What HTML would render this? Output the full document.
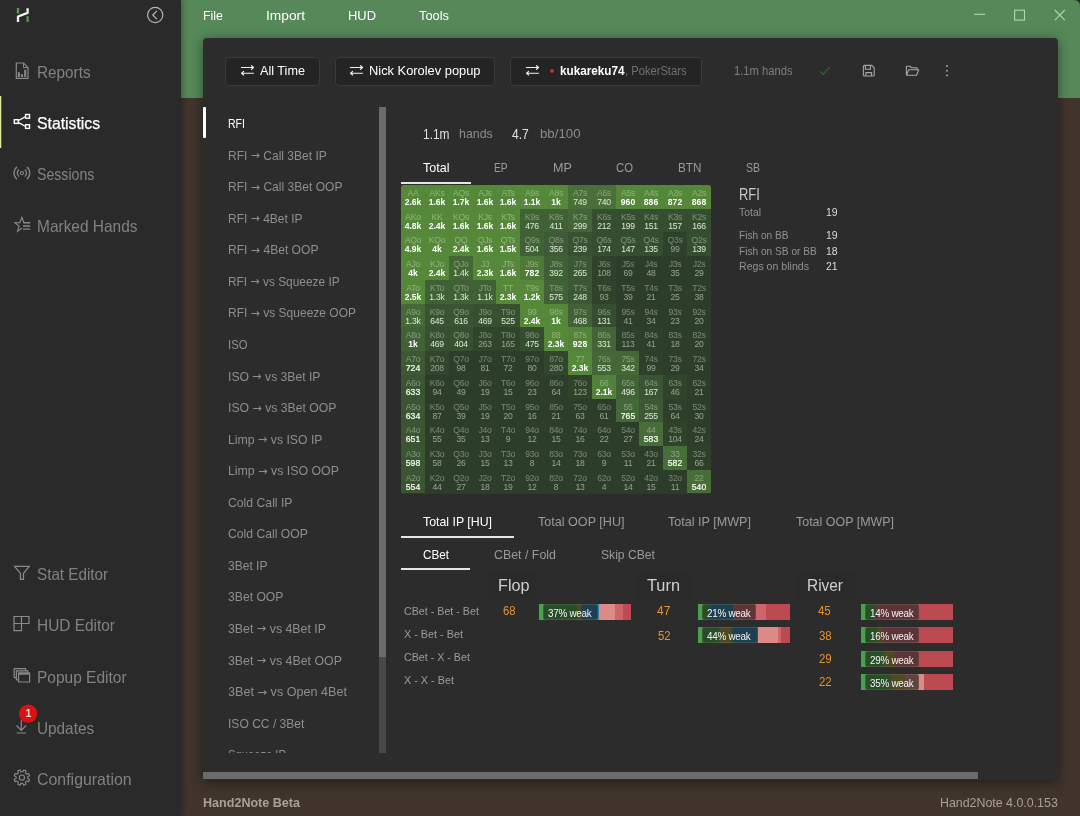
<!DOCTYPE html>
<html lang="en">
<head>
<meta charset="utf-8">
<title>Hand2Note</title>
<style>
*{box-sizing:border-box;margin:0;padding:0}
html,body{width:1080px;height:816px;overflow:hidden}
body{position:relative;will-change:transform;background:#40342d;font-family:"Liberation Sans",sans-serif;color:#ddd}
span,div,svg{position:absolute}
span{white-space:nowrap;display:block}
#green{left:181px;top:0;width:899px;height:98px;background:#56885a}
#side{left:0;top:0;width:181px;height:816px;background:#2a2a2a;box-shadow:1px 0 6px rgba(0,0,0,.38)}
#act{left:0;top:96px;width:2px;height:52px;background:linear-gradient(90deg,#e3ed98 0,#e3ed98 1.2px,rgba(227,237,152,.25) 1.2px)}
#panel{left:203px;top:38px;width:855px;height:742px;background:#2c2c2c;border-radius:4px 4px 2px 2px;box-shadow:0 2px 12px rgba(0,0,0,.45)}
.btn{background:#242424;border:1px solid #3a3a3a;border-radius:4px;height:29px;top:57px}
#sel{left:203px;top:107px;width:3px;height:31px;background:#fff;border-radius:1px}
#vtrack{left:379px;top:107px;width:7px;height:646px;background:#484848}
#vthumb{left:379px;top:107px;width:7px;height:550px;background:#6b6b6b}
#hthumb{left:203px;top:772px;width:775px;height:7px;background:#6b6b6b}
#list{left:206px;top:107px;width:172px;height:646px;overflow:hidden}
#grid{left:401px;top:185px;width:310px;height:309px;border-radius:3px;overflow:hidden;background:#2b3c28}
.c{width:24px;height:24px}
.c i,.c b{position:absolute;left:-8px;width:40px;text-align:center;font-style:normal;font-size:8.6px;line-height:10px;white-space:nowrap}
.c i{top:2.6px;color:rgba(232,242,226,.40);letter-spacing:-.3px}
.c b{top:12.2px;letter-spacing:-.2px}
.B{color:#fff;font-weight:700;letter-spacing:0 !important}
.R{color:#e0e6dc;font-weight:400}
.M{color:#fafcf8;font-weight:400;-webkit-text-stroke:.22px #fafcf8;letter-spacing:0 !important}
.D{color:#98a294;font-weight:400}
.ar{font-family:"DejaVu Sans",sans-serif;font-style:normal;font-size:92%;position:relative;top:-.5px}
.ul{height:2px;background:#e6e6e6}
.hd{background:#2a2a2a;border-radius:3px}
.bar{height:16px;width:92px;overflow:hidden}
.bar div{top:0;height:16px}
.bar .ov{top:0;height:16px;background:rgba(18,20,18,.6);border:1px solid rgba(130,140,100,.28);border-radius:2px}
.bar span{top:1px;line-height:16px;font-size:11.4px;color:#f4f4f4}
</style>
</head>
<body>
<div id="green"></div>
<div id="side"></div>
<div id="act"></div>
<svg style="left:8px;top:0px" width="30" height="30" viewBox="8 0 30 30" fill="none" stroke-width="2.3">
<path d="M18 8v5.6M27.6 16.2v5.7" stroke="#52a043"/>
<path d="M18 21.9v-5.4l9.6-3.6V8.3" stroke="#f4f4f4" stroke-linejoin="round"/></svg>
<svg style="left:145px;top:5px" width="20" height="20" viewBox="0 0 20 20" fill="none" stroke="#b6b6b6" stroke-width="1.2">
<circle cx="10.2" cy="10" r="7.6"/><path d="M11.6 6.2L7.8 10l3.8 3.8" stroke-linecap="round" stroke-linejoin="round"/></svg>
<span style="top:60.4px;font-size:16.5px;line-height:24px;color:#828282;transform:scaleX(0.928);transform-origin:0 50%;left:36.9px;">Reports</span>
<span style="top:111.2px;font-size:16.5px;line-height:24px;color:#ffffff;transform:scaleX(0.956);transform-origin:0 50%;left:36.9px;-webkit-text-stroke:.25px #fff;">Statistics</span>
<span style="top:162.4px;font-size:16.5px;line-height:24px;color:#828282;transform:scaleX(0.856);transform-origin:0 50%;left:36.9px;">Sessions</span>
<span style="top:213.5px;font-size:16.5px;line-height:24px;color:#828282;transform:scaleX(0.937);transform-origin:0 50%;left:36.9px;">Marked Hands</span>
<span style="top:562.3px;font-size:16.5px;line-height:24px;color:#828282;transform:scaleX(0.923);transform-origin:0 50%;left:36.9px;">Stat Editor</span>
<span style="top:613.3px;font-size:16.5px;line-height:24px;color:#828282;transform:scaleX(0.934);transform-origin:0 50%;left:36.9px;">HUD Editor</span>
<span style="top:664.6px;font-size:16.5px;line-height:24px;color:#828282;transform:scaleX(0.939);transform-origin:0 50%;left:36.9px;">Popup Editor</span>
<span style="top:715.7px;font-size:16.5px;line-height:24px;color:#828282;transform:scaleX(0.929);transform-origin:0 50%;left:36.9px;">Updates</span>
<span style="top:766.9px;font-size:16.5px;line-height:24px;color:#828282;transform:scaleX(0.964);transform-origin:0 50%;left:36.9px;">Configuration</span>
<svg style="left:8px;top:54px" width="30" height="30" viewBox="8 54 30 30" fill="none" stroke="#8a8a8a" stroke-width="1.2">
<path d="M16.3 63h7.2l4.5 4.5v10.9H16.3z"/><path d="M23.5 63v4.6H28" stroke-width="1"/>
<path d="M17.8 72.2h2.1v4.7h-2.1zM21 74.2h2v2.7h-2zM24.2 69.8h2v7.1h-2z" fill="#8a8a8a" stroke="none"/></svg>
<svg style="left:8px;top:106px" width="30" height="30" viewBox="8 106 30 30" fill="none" stroke="#ffffff" stroke-width="1.4">
<rect x="14.3" y="119.7" width="3.9" height="3.7"/><rect x="25.6" y="114.5" width="3.9" height="3.7"/><rect x="25.6" y="124.7" width="3.9" height="3.7"/>
<path d="M18.6 120.5l6.6-3.6M18.6 122.6l6.6 3.7" stroke-width="1.3"/></svg>
<svg style="left:8px;top:158px" width="30" height="30" viewBox="8 158 30 30" fill="none" stroke="#8a8a8a" stroke-width="1.25">
<circle cx="21.9" cy="173.1" r="1.6" stroke-width="1.1"/>
<path d="M18.94 169.58a4.6 4.6 0 0 0 0 7.04M24.86 169.58a4.6 4.6 0 0 1 0 7.04"/>
<path d="M16.93 166.96a7.9 7.9 0 0 0 0 12.28M26.87 166.96a7.9 7.9 0 0 1 0 12.28"/></svg>
<svg style="left:8px;top:209px" width="30" height="30" viewBox="8 209 30 30" fill="none" stroke="#8a8a8a" stroke-width="1.15" stroke-linejoin="miter">
<path d="M23.9 222.7l-2-5.3-2 5.3h-5l4.2 3.4-1.6 5.2 4.6-3.2"/>
<path d="M23.4 222.7h6.8M23 226h7.2M23 229.1h7.2" stroke-width="1.4"/></svg>
<svg style="left:8px;top:558px" width="30" height="30" viewBox="8 558 30 30" fill="none" stroke="#8a8a8a" stroke-width="1.25" stroke-linejoin="miter">
<path d="M14.6 566.3h14.6l-5.7 7.1v6h-3.1v-6z"/></svg>
<svg style="left:8px;top:609px" width="30" height="30" viewBox="8 609 30 30" fill="none" stroke="#8a8a8a" stroke-width="1.2">
<path d="M14 616.5h15v7h-7.5v7.1H14zM21.5 616.5v7M14 623.5h7.5"/></svg>
<svg style="left:8px;top:660px" width="30" height="30" viewBox="8 660 30 30" fill="none" stroke="#8a8a8a" stroke-width="1.2" stroke-linejoin="round">
<rect x="18.6" y="672.9" width="11" height="9.1"/><path d="M18.6 673.9h11" stroke-width="1.6"/>
<path d="M27.8 672.3v-1.5H16.4v9h2M25.6 670.2v-1.5H14.2v8.9h2"/></svg>
<svg style="left:8px;top:702px" width="30" height="40" viewBox="8 702 30 40" fill="none" stroke="#8a8a8a" stroke-width="1.2">
<path d="M21.3 720v10.2M16.5 725.5l4.8 4.8 4.8-4.8M16.6 733h9.4"/>
<circle cx="28.1" cy="713.8" r="9.2" fill="#d81212" stroke="none"/></svg>
<span style="top:707.4px;font-size:10.5px;line-height:12px;color:#ffd2cd;left:-71.7px;width:200px;text-align:center;font-weight:700;">1</span>
<svg style="left:8px;top:762px" width="30" height="30" viewBox="8 762 30 30" fill="none" stroke="#8a8a8a" stroke-width="1.15" stroke-linejoin="round">
<path d="M29.58 779.44L28.64 781.73L26.67 781.07L25.37 782.37L26.03 784.34L23.74 785.28L22.82 783.43L20.98 783.43L20.06 785.28L17.77 784.34L18.43 782.37L17.13 781.07L15.16 781.73L14.22 779.44L16.07 778.52L16.07 776.68L14.22 775.76L15.16 773.47L17.13 774.13L18.43 772.83L17.77 770.86L20.06 769.92L20.98 771.77L22.82 771.77L23.74 769.92L26.03 770.86L25.37 772.83L26.67 774.13L28.64 773.47L29.58 775.76L27.73 776.68L27.73 778.52z"/><circle cx="21.9" cy="777.6" r="2.6"/></svg>
<span style="top:6.5px;font-size:13px;line-height:18px;color:#ffffff;transform:scaleX(0.955);transform-origin:0 50%;left:203px;">File</span>
<span style="top:6.5px;font-size:13px;line-height:18px;color:#ffffff;transform:scaleX(1.059);transform-origin:0 50%;left:266px;">Import</span>
<span style="top:6.5px;font-size:13px;line-height:18px;color:#ffffff;transform:scaleX(0.994);transform-origin:0 50%;left:348px;">HUD</span>
<span style="top:6.5px;font-size:13px;line-height:18px;color:#ffffff;transform:scaleX(0.989);transform-origin:0 50%;left:419px;">Tools</span>
<svg style="left:966px;top:0" width="110" height="30" viewBox="0 0 110 30" fill="none" stroke="#a9d8a5" stroke-width="1.15">
<path d="M8 14.3h11"/><rect x="48.6" y="10.2" width="9.9" height="9.9"/><path d="M88.8 10l10 10.2M98.8 10l-10 10.2"/></svg>
<svg style="left:1072px;top:0" width="8" height="8" viewBox="0 0 8 8"><path d="M8 0H2.5A5.5 5.5 0 0 1 8 5.5z" fill="#20271f"/></svg>
<div id="panel"></div>
<div class="btn" style="left:225px;width:95px"></div>
<div class="btn" style="left:335px;width:160px"></div>
<div class="btn" style="left:510px;width:192px"></div>
<svg style="left:240px;top:64px" width="16" height="14" viewBox="0 0 16 14" fill="none" stroke="#f0f0f0" stroke-width="1.15" stroke-linejoin="round" stroke-linecap="round">
<path d="M1.4 3.5h12M11.5 1.7l2 1.8-2 1.8M13.4 9.2H1.6M3.6 7.4L1.6 9.2l2 1.8"/></svg>
<svg style="left:349px;top:64px" width="16" height="14" viewBox="0 0 16 14" fill="none" stroke="#f0f0f0" stroke-width="1.15" stroke-linejoin="round" stroke-linecap="round">
<path d="M1.4 3.5h12M11.5 1.7l2 1.8-2 1.8M13.4 9.2H1.6M3.6 7.4L1.6 9.2l2 1.8"/></svg>
<svg style="left:524.5px;top:64px" width="16" height="14" viewBox="0 0 16 14" fill="none" stroke="#f0f0f0" stroke-width="1.15" stroke-linejoin="round" stroke-linecap="round">
<path d="M1.4 3.5h12M11.5 1.7l2 1.8-2 1.8M13.4 9.2H1.6M3.6 7.4L1.6 9.2l2 1.8"/></svg>
<span style="top:62.0px;font-size:13px;line-height:18px;color:#ffffff;transform:scaleX(0.973);transform-origin:0 50%;left:259.5px;">All Time</span>
<span style="top:62.0px;font-size:13px;line-height:18px;color:#ffffff;transform:scaleX(0.989);transform-origin:0 50%;left:369px;">Nick Korolev popup</span>
<div style="left:550px;top:69px;width:4px;height:4px;border-radius:2px;background:#aa382e"></div>
<span style="top:61.5px;font-size:13px;line-height:18px;color:#ffffff;transform:scaleX(0.901);transform-origin:0 50%;left:560px;font-weight:700;">kukareku74</span>
<span style="top:61.5px;font-size:13px;line-height:18px;color:#707070;transform:scaleX(0.860);transform-origin:0 50%;left:625px;">, PokerStars</span>
<span style="top:62.0px;font-size:12.5px;line-height:18px;color:#7e7e7e;transform:scaleX(0.896);transform-origin:0 50%;left:733.5px;">1.1m hands</span>
<svg style="left:817px;top:63px" width="16" height="16" viewBox="0 0 16 16" fill="none" stroke="#256a25" stroke-width="1.3"><path d="M3 8.2l3 3 6.8-7"/></svg>
<svg style="left:861px;top:63px" width="16" height="16" viewBox="0 0 16 16" fill="none" stroke="#a6a6a6" stroke-width="1.1">
<path d="M2.4 3.4a1 1 0 0 1 1-1h7.4l2.4 2.4v7.2a1 1 0 0 1-1 1H3.4a1 1 0 0 1-1-1z"/><path d="M4.4 2.4v3.8h5v-3.8M4.8 13V9.6h5.8V13"/></svg>
<svg style="left:904px;top:63px" width="18" height="16" viewBox="0 0 18 16" fill="none" stroke="#a6a6a6" stroke-width="1.1" stroke-linejoin="round">
<path d="M2.4 12.2V3.2h3.6l1.3 1.5h5.7v2M2.4 12.2l2.3-5.5h10.1l-2.3 5.5z"/></svg>
<svg style="left:943px;top:62px" width="8" height="18" viewBox="0 0 8 18" fill="#a8a8a8"><circle cx="4" cy="4" r=".95"/><circle cx="4" cy="8.7" r=".95"/><circle cx="4" cy="13.4" r=".95"/></svg>
<div id="sel"></div>
<div id="vtrack"></div><div id="vthumb"></div>
<div id="list">
<span style="top:8.1px;font-size:12.6px;line-height:18px;color:#ffffff;transform:scaleX(0.838);transform-origin:0 50%;left:22px;">RFI</span>
<span style="top:39.7px;font-size:12.6px;line-height:18px;color:#8e8e8e;transform:scaleX(0.954);transform-origin:0 50%;left:22px;">RFI <i class="ar">→</i> Call 3Bet IP</span>
<span style="top:71.2px;font-size:12.6px;line-height:18px;color:#8e8e8e;transform:scaleX(0.957);transform-origin:0 50%;left:22px;">RFI <i class="ar">→</i> Call 3Bet OOP</span>
<span style="top:102.8px;font-size:12.6px;line-height:18px;color:#8e8e8e;transform:scaleX(0.951);transform-origin:0 50%;left:22px;">RFI <i class="ar">→</i> 4Bet IP</span>
<span style="top:134.3px;font-size:12.6px;line-height:18px;color:#8e8e8e;transform:scaleX(0.958);transform-origin:0 50%;left:22px;">RFI <i class="ar">→</i> 4Bet OOP</span>
<span style="top:165.9px;font-size:12.6px;line-height:18px;color:#8e8e8e;transform:scaleX(0.945);transform-origin:0 50%;left:22px;">RFI <i class="ar">→</i> vs Squeeze IP</span>
<span style="top:197.4px;font-size:12.6px;line-height:18px;color:#8e8e8e;transform:scaleX(0.953);transform-origin:0 50%;left:22px;">RFI <i class="ar">→</i> vs Squeeze OOP</span>
<span style="top:228.9px;font-size:12.6px;line-height:18px;color:#8e8e8e;transform:scaleX(0.898);transform-origin:0 50%;left:22px;">ISO</span>
<span style="top:260.5px;font-size:12.6px;line-height:18px;color:#8e8e8e;transform:scaleX(0.965);transform-origin:0 50%;left:22px;">ISO <i class="ar">→</i> vs 3Bet IP</span>
<span style="top:292.0px;font-size:12.6px;line-height:18px;color:#8e8e8e;transform:scaleX(0.969);transform-origin:0 50%;left:22px;">ISO <i class="ar">→</i> vs 3Bet OOP</span>
<span style="top:323.6px;font-size:12.6px;line-height:18px;color:#8e8e8e;transform:scaleX(0.972);transform-origin:0 50%;left:22px;">Limp <i class="ar">→</i> vs ISO IP</span>
<span style="top:355.1px;font-size:12.6px;line-height:18px;color:#8e8e8e;transform:scaleX(0.979);transform-origin:0 50%;left:22px;">Limp <i class="ar">→</i> vs ISO OOP</span>
<span style="top:386.7px;font-size:12.6px;line-height:18px;color:#8e8e8e;transform:scaleX(0.970);transform-origin:0 50%;left:22px;">Cold Call IP</span>
<span style="top:418.2px;font-size:12.6px;line-height:18px;color:#8e8e8e;transform:scaleX(0.968);transform-origin:0 50%;left:22px;">Cold Call OOP</span>
<span style="top:449.8px;font-size:12.6px;line-height:18px;color:#8e8e8e;transform:scaleX(0.956);transform-origin:0 50%;left:22px;">3Bet IP</span>
<span style="top:481.4px;font-size:12.6px;line-height:18px;color:#8e8e8e;transform:scaleX(0.966);transform-origin:0 50%;left:22px;">3Bet OOP</span>
<span style="top:512.9px;font-size:12.6px;line-height:18px;color:#8e8e8e;transform:scaleX(0.979);transform-origin:0 50%;left:22px;">3Bet <i class="ar">→</i> vs 4Bet IP</span>
<span style="top:544.5px;font-size:12.6px;line-height:18px;color:#8e8e8e;transform:scaleX(0.981);transform-origin:0 50%;left:22px;">3Bet <i class="ar">→</i> vs 4Bet OOP</span>
<span style="top:576.0px;font-size:12.6px;line-height:18px;color:#8e8e8e;transform:scaleX(1.000);transform-origin:0 50%;left:22px;">3Bet <i class="ar">→</i> vs Open 4Bet</span>
<span style="top:607.6px;font-size:12.6px;line-height:18px;color:#8e8e8e;transform:scaleX(0.958);transform-origin:0 50%;left:22px;">ISO CC / 3Bet</span>
<span style="top:639.1px;font-size:12.6px;line-height:18px;color:#8e8e8e;transform:scaleX(0.890);transform-origin:0 50%;left:22px;">Squeeze IP</span>
</div>
<span style="top:124.3px;font-size:14px;line-height:20px;color:#e2e2e2;transform:scaleX(0.851);transform-origin:0 50%;left:422.5px;">1.1m</span>
<span style="top:124.3px;font-size:13px;line-height:20px;color:#8c8c8c;transform:scaleX(0.951);transform-origin:0 50%;left:459px;">hands</span>
<span style="top:124.3px;font-size:14px;line-height:20px;color:#e2e2e2;transform:scaleX(0.858);transform-origin:0 50%;left:512.3px;">4.7</span>
<span style="top:124.3px;font-size:13px;line-height:20px;color:#8c8c8c;transform:scaleX(1.019);transform-origin:0 50%;left:539.5px;">bb/100</span>
<span style="top:159.0px;font-size:13px;line-height:18px;color:#ffffff;transform:scaleX(0.965);transform-origin:0 50%;left:423px;">Total</span>
<span style="top:159.0px;font-size:13px;line-height:18px;color:#9a9a9a;transform:scaleX(0.784);transform-origin:0 50%;left:494.4px;">EP</span>
<span style="top:159.0px;font-size:13px;line-height:18px;color:#9a9a9a;transform:scaleX(0.964);transform-origin:0 50%;left:552.7px;">MP</span>
<span style="top:159.0px;font-size:13px;line-height:18px;color:#9a9a9a;transform:scaleX(0.872);transform-origin:0 50%;left:616.2px;">CO</span>
<span style="top:159.0px;font-size:13px;line-height:18px;color:#9a9a9a;transform:scaleX(0.900);transform-origin:0 50%;left:678px;">BTN</span>
<span style="top:159.0px;font-size:13px;line-height:18px;color:#9a9a9a;transform:scaleX(0.807);transform-origin:0 50%;left:746px;">SB</span>
<div class="ul" style="left:401px;top:182px;width:70px"></div>
<div id="grid">
<div class="c" style="left:0px;top:0px;width:24px;height:24px;background:rgb(85, 136, 57)"><i>AA</i><b class="B">2.6k</b></div>
<div class="c" style="left:24px;top:0px;width:24px;height:24px;background:rgb(85, 136, 57)"><i>AKs</i><b class="B">1.6k</b></div>
<div class="c" style="left:48px;top:0px;width:24px;height:24px;background:rgb(85, 136, 57)"><i>AQs</i><b class="B">1.7k</b></div>
<div class="c" style="left:72px;top:0px;width:23px;height:24px;background:rgb(85, 136, 57)"><i>AJs</i><b class="B">1.6k</b></div>
<div class="c" style="left:95px;top:0px;width:24px;height:24px;background:rgb(85, 136, 57)"><i>ATs</i><b class="B">1.6k</b></div>
<div class="c" style="left:119px;top:0px;width:24px;height:24px;background:rgb(85, 136, 57)"><i>A9s</i><b class="B">1.1k</b></div>
<div class="c" style="left:143px;top:0px;width:24px;height:24px;background:rgb(85, 136, 57)"><i>A8s</i><b class="B">1k</b></div>
<div class="c" style="left:167px;top:0px;width:24px;height:24px;background:rgb(72, 112, 56)"><i>A7s</i><b class="R">749</b></div>
<div class="c" style="left:191px;top:0px;width:24px;height:24px;background:rgb(72, 112, 56)"><i>A6s</i><b class="R">740</b></div>
<div class="c" style="left:215px;top:0px;width:23px;height:24px;background:rgb(84, 135, 57)"><i>A5s</i><b class="B">960</b></div>
<div class="c" style="left:238px;top:0px;width:24px;height:24px;background:rgb(84, 135, 57)"><i>A4s</i><b class="B">886</b></div>
<div class="c" style="left:262px;top:0px;width:24px;height:24px;background:rgb(84, 135, 57)"><i>A3s</i><b class="B">872</b></div>
<div class="c" style="left:286px;top:0px;width:24px;height:24px;background:rgb(84, 135, 57)"><i>A2s</i><b class="B">868</b></div>
<div class="c" style="left:0px;top:24px;width:24px;height:23px;background:rgb(85, 136, 57)"><i>AKo</i><b class="B">4.8k</b></div>
<div class="c" style="left:24px;top:24px;width:24px;height:23px;background:rgb(85, 136, 57)"><i>KK</i><b class="B">2.4k</b></div>
<div class="c" style="left:48px;top:24px;width:24px;height:23px;background:rgb(85, 136, 57)"><i>KQs</i><b class="B">1.6k</b></div>
<div class="c" style="left:72px;top:24px;width:23px;height:23px;background:rgb(85, 136, 57)"><i>KJs</i><b class="B">1.6k</b></div>
<div class="c" style="left:95px;top:24px;width:24px;height:23px;background:rgb(85, 136, 57)"><i>KTs</i><b class="B">1.6k</b></div>
<div class="c" style="left:119px;top:24px;width:24px;height:23px;background:rgb(64, 96, 54)"><i>K9s</i><b class="R">476</b></div>
<div class="c" style="left:143px;top:24px;width:24px;height:23px;background:rgb(64, 96, 54)"><i>K8s</i><b class="R">411</b></div>
<div class="c" style="left:167px;top:24px;width:24px;height:23px;background:rgb(67, 101, 55)"><i>K7s</i><b class="R">299</b></div>
<div class="c" style="left:191px;top:24px;width:24px;height:23px;background:rgb(54, 78, 48)"><i>K6s</i><b class="R">212</b></div>
<div class="c" style="left:215px;top:24px;width:23px;height:23px;background:rgb(54, 78, 48)"><i>K5s</i><b class="R">199</b></div>
<div class="c" style="left:238px;top:24px;width:24px;height:23px;background:rgb(54, 78, 48)"><i>K4s</i><b class="R">151</b></div>
<div class="c" style="left:262px;top:24px;width:24px;height:23px;background:rgb(54, 78, 48)"><i>K3s</i><b class="R">157</b></div>
<div class="c" style="left:286px;top:24px;width:24px;height:23px;background:rgb(54, 78, 48)"><i>K2s</i><b class="R">166</b></div>
<div class="c" style="left:0px;top:47px;width:24px;height:24px;background:rgb(85, 136, 57)"><i>AQo</i><b class="B">4.9k</b></div>
<div class="c" style="left:24px;top:47px;width:24px;height:24px;background:rgb(85, 136, 57)"><i>KQo</i><b class="B">4k</b></div>
<div class="c" style="left:48px;top:47px;width:24px;height:24px;background:rgb(85, 136, 57)"><i>QQ</i><b class="B">2.4k</b></div>
<div class="c" style="left:72px;top:47px;width:23px;height:24px;background:rgb(85, 136, 57)"><i>QJs</i><b class="B">1.6k</b></div>
<div class="c" style="left:95px;top:47px;width:24px;height:24px;background:rgb(85, 136, 57)"><i>QTs</i><b class="B">1.5k</b></div>
<div class="c" style="left:119px;top:47px;width:24px;height:24px;background:rgb(64, 96, 54)"><i>Q9s</i><b class="R">504</b></div>
<div class="c" style="left:143px;top:47px;width:24px;height:24px;background:rgb(61, 91, 52)"><i>Q8s</i><b class="R">356</b></div>
<div class="c" style="left:167px;top:47px;width:24px;height:24px;background:rgb(56, 82, 49)"><i>Q7s</i><b class="R">239</b></div>
<div class="c" style="left:191px;top:47px;width:24px;height:24px;background:rgb(54, 78, 48)"><i>Q6s</i><b class="R">174</b></div>
<div class="c" style="left:215px;top:47px;width:23px;height:24px;background:rgb(54, 78, 48)"><i>Q5s</i><b class="R">147</b></div>
<div class="c" style="left:238px;top:47px;width:24px;height:24px;background:rgb(54, 78, 48)"><i>Q4s</i><b class="R">135</b></div>
<div class="c" style="left:262px;top:47px;width:24px;height:24px;background:rgb(46, 65, 42)"><i>Q3s</i><b class="D">99</b></div>
<div class="c" style="left:286px;top:47px;width:24px;height:24px;background:rgb(54, 78, 48)"><i>Q2s</i><b class="R">139</b></div>
<div class="c" style="left:0px;top:71px;width:24px;height:24px;background:rgb(85, 136, 57)"><i>AJo</i><b class="B">4k</b></div>
<div class="c" style="left:24px;top:71px;width:24px;height:24px;background:rgb(85, 136, 57)"><i>KJo</i><b class="B">2.4k</b></div>
<div class="c" style="left:48px;top:71px;width:24px;height:24px;background:rgb(68, 103, 55)"><i>QJo</i><b class="R">1.4k</b></div>
<div class="c" style="left:72px;top:71px;width:23px;height:24px;background:rgb(85, 136, 57)"><i>JJ</i><b class="B">2.3k</b></div>
<div class="c" style="left:95px;top:71px;width:24px;height:24px;background:rgb(85, 136, 57)"><i>JTs</i><b class="B">1.6k</b></div>
<div class="c" style="left:119px;top:71px;width:24px;height:24px;background:rgb(78, 122, 57)"><i>J9s</i><b class="B">782</b></div>
<div class="c" style="left:143px;top:71px;width:24px;height:24px;background:rgb(63, 95, 53)"><i>J8s</i><b class="R">392</b></div>
<div class="c" style="left:167px;top:71px;width:24px;height:24px;background:rgb(59, 87, 51)"><i>J7s</i><b class="R">265</b></div>
<div class="c" style="left:191px;top:71px;width:24px;height:24px;background:rgb(47, 67, 43)"><i>J6s</i><b class="D">108</b></div>
<div class="c" style="left:215px;top:71px;width:23px;height:24px;background:rgb(44, 62, 41)"><i>J5s</i><b class="D">69</b></div>
<div class="c" style="left:238px;top:71px;width:24px;height:24px;background:rgb(44, 62, 41)"><i>J4s</i><b class="D">48</b></div>
<div class="c" style="left:262px;top:71px;width:24px;height:24px;background:rgb(44, 62, 41)"><i>J3s</i><b class="D">35</b></div>
<div class="c" style="left:286px;top:71px;width:24px;height:24px;background:rgb(44, 62, 41)"><i>J2s</i><b class="D">29</b></div>
<div class="c" style="left:0px;top:95px;width:24px;height:24px;background:rgb(85, 136, 57)"><i>ATo</i><b class="B">2.5k</b></div>
<div class="c" style="left:24px;top:95px;width:24px;height:24px;background:rgb(64, 96, 54)"><i>KTo</i><b class="R">1.3k</b></div>
<div class="c" style="left:48px;top:95px;width:24px;height:24px;background:rgb(64, 96, 54)"><i>QTo</i><b class="R">1.3k</b></div>
<div class="c" style="left:72px;top:95px;width:23px;height:24px;background:rgb(64, 96, 54)"><i>JTo</i><b class="R">1.1k</b></div>
<div class="c" style="left:95px;top:95px;width:24px;height:24px;background:rgb(85, 136, 57)"><i>TT</i><b class="B">2.3k</b></div>
<div class="c" style="left:119px;top:95px;width:24px;height:24px;background:rgb(85, 136, 57)"><i>T9s</i><b class="B">1.2k</b></div>
<div class="c" style="left:143px;top:95px;width:24px;height:24px;background:rgb(65, 98, 54)"><i>T8s</i><b class="R">575</b></div>
<div class="c" style="left:167px;top:95px;width:24px;height:24px;background:rgb(59, 87, 51)"><i>T7s</i><b class="R">248</b></div>
<div class="c" style="left:191px;top:95px;width:24px;height:24px;background:rgb(47, 67, 43)"><i>T6s</i><b class="D">93</b></div>
<div class="c" style="left:215px;top:95px;width:23px;height:24px;background:rgb(44, 61, 41)"><i>T5s</i><b class="D">39</b></div>
<div class="c" style="left:238px;top:95px;width:24px;height:24px;background:rgb(44, 61, 41)"><i>T4s</i><b class="D">21</b></div>
<div class="c" style="left:262px;top:95px;width:24px;height:24px;background:rgb(44, 61, 41)"><i>T3s</i><b class="D">25</b></div>
<div class="c" style="left:286px;top:95px;width:24px;height:24px;background:rgb(44, 61, 41)"><i>T2s</i><b class="D">38</b></div>
<div class="c" style="left:0px;top:119px;width:24px;height:23px;background:rgb(69, 106, 56)"><i>A9o</i><b class="R">1.3k</b></div>
<div class="c" style="left:24px;top:119px;width:24px;height:23px;background:rgb(57, 84, 50)"><i>K9o</i><b class="R">645</b></div>
<div class="c" style="left:48px;top:119px;width:24px;height:23px;background:rgb(57, 84, 50)"><i>Q9o</i><b class="R">616</b></div>
<div class="c" style="left:72px;top:119px;width:23px;height:23px;background:rgb(55, 81, 48)"><i>J9o</i><b class="R">469</b></div>
<div class="c" style="left:95px;top:119px;width:24px;height:23px;background:rgb(55, 81, 48)"><i>T9o</i><b class="R">525</b></div>
<div class="c" style="left:119px;top:119px;width:24px;height:23px;background:rgb(85, 136, 57)"><i>99</i><b class="B">2.4k</b></div>
<div class="c" style="left:143px;top:119px;width:24px;height:23px;background:rgb(85, 136, 57)"><i>98s</i><b class="B">1k</b></div>
<div class="c" style="left:167px;top:119px;width:24px;height:23px;background:rgb(65, 98, 54)"><i>97s</i><b class="R">468</b></div>
<div class="c" style="left:191px;top:119px;width:24px;height:23px;background:rgb(54, 78, 48)"><i>96s</i><b class="R">131</b></div>
<div class="c" style="left:215px;top:119px;width:23px;height:23px;background:rgb(44, 61, 41)"><i>95s</i><b class="D">41</b></div>
<div class="c" style="left:238px;top:119px;width:24px;height:23px;background:rgb(44, 61, 41)"><i>94s</i><b class="D">34</b></div>
<div class="c" style="left:262px;top:119px;width:24px;height:23px;background:rgb(44, 61, 41)"><i>93s</i><b class="D">23</b></div>
<div class="c" style="left:286px;top:119px;width:24px;height:23px;background:rgb(44, 61, 41)"><i>92s</i><b class="D">20</b></div>
<div class="c" style="left:0px;top:142px;width:24px;height:24px;background:rgb(65, 98, 54)"><i>A8o</i><b class="B">1k</b></div>
<div class="c" style="left:24px;top:142px;width:24px;height:24px;background:rgb(55, 81, 48)"><i>K8o</i><b class="R">469</b></div>
<div class="c" style="left:48px;top:142px;width:24px;height:24px;background:rgb(55, 81, 48)"><i>Q8o</i><b class="R">404</b></div>
<div class="c" style="left:72px;top:142px;width:23px;height:24px;background:rgb(48, 69, 44)"><i>J8o</i><b class="D">263</b></div>
<div class="c" style="left:95px;top:142px;width:24px;height:24px;background:rgb(48, 69, 44)"><i>T8o</i><b class="D">165</b></div>
<div class="c" style="left:119px;top:142px;width:24px;height:24px;background:rgb(54, 78, 48)"><i>98o</i><b class="R">475</b></div>
<div class="c" style="left:143px;top:142px;width:24px;height:24px;background:rgb(85, 136, 57)"><i>88</i><b class="B">2.3k</b></div>
<div class="c" style="left:167px;top:142px;width:24px;height:24px;background:rgb(83, 132, 57)"><i>87s</i><b class="B">928</b></div>
<div class="c" style="left:191px;top:142px;width:24px;height:24px;background:rgb(66, 100, 55)"><i>86s</i><b class="R">331</b></div>
<div class="c" style="left:215px;top:142px;width:23px;height:24px;background:rgb(45, 64, 42)"><i>85s</i><b class="D">113</b></div>
<div class="c" style="left:238px;top:142px;width:24px;height:24px;background:rgb(45, 64, 42)"><i>84s</i><b class="D">41</b></div>
<div class="c" style="left:262px;top:142px;width:24px;height:24px;background:rgb(44, 61, 41)"><i>83s</i><b class="D">18</b></div>
<div class="c" style="left:286px;top:142px;width:24px;height:24px;background:rgb(44, 61, 41)"><i>82s</i><b class="D">20</b></div>
<div class="c" style="left:0px;top:166px;width:24px;height:24px;background:rgb(60, 89, 51)"><i>A7o</i><b class="M">724</b></div>
<div class="c" style="left:24px;top:166px;width:24px;height:24px;background:rgb(49, 70, 44)"><i>K7o</i><b class="D">208</b></div>
<div class="c" style="left:48px;top:166px;width:24px;height:24px;background:rgb(44, 61, 41)"><i>Q7o</i><b class="D">98</b></div>
<div class="c" style="left:72px;top:166px;width:23px;height:24px;background:rgb(44, 61, 41)"><i>J7o</i><b class="D">81</b></div>
<div class="c" style="left:95px;top:166px;width:24px;height:24px;background:rgb(44, 61, 41)"><i>T7o</i><b class="D">72</b></div>
<div class="c" style="left:119px;top:166px;width:24px;height:24px;background:rgb(44, 61, 41)"><i>97o</i><b class="D">80</b></div>
<div class="c" style="left:143px;top:166px;width:24px;height:24px;background:rgb(49, 70, 44)"><i>87o</i><b class="D">280</b></div>
<div class="c" style="left:167px;top:166px;width:24px;height:24px;background:rgb(85, 136, 57)"><i>77</i><b class="B">2.3k</b></div>
<div class="c" style="left:191px;top:166px;width:24px;height:24px;background:rgb(68, 103, 55)"><i>76s</i><b class="R">553</b></div>
<div class="c" style="left:215px;top:166px;width:23px;height:24px;background:rgb(68, 104, 55)"><i>75s</i><b class="R">342</b></div>
<div class="c" style="left:238px;top:166px;width:24px;height:24px;background:rgb(46, 64, 42)"><i>74s</i><b class="D">99</b></div>
<div class="c" style="left:262px;top:166px;width:24px;height:24px;background:rgb(44, 61, 41)"><i>73s</i><b class="D">29</b></div>
<div class="c" style="left:286px;top:166px;width:24px;height:24px;background:rgb(44, 61, 41)"><i>72s</i><b class="D">34</b></div>
<div class="c" style="left:0px;top:190px;width:24px;height:24px;background:rgb(58, 85, 50)"><i>A6o</i><b class="M">633</b></div>
<div class="c" style="left:24px;top:190px;width:24px;height:24px;background:rgb(44, 62, 41)"><i>K6o</i><b class="D">94</b></div>
<div class="c" style="left:48px;top:190px;width:24px;height:24px;background:rgb(44, 61, 41)"><i>Q6o</i><b class="D">49</b></div>
<div class="c" style="left:72px;top:190px;width:23px;height:24px;background:rgb(44, 61, 41)"><i>J6o</i><b class="D">19</b></div>
<div class="c" style="left:95px;top:190px;width:24px;height:24px;background:rgb(44, 61, 41)"><i>T6o</i><b class="D">15</b></div>
<div class="c" style="left:119px;top:190px;width:24px;height:24px;background:rgb(44, 61, 41)"><i>96o</i><b class="D">23</b></div>
<div class="c" style="left:143px;top:190px;width:24px;height:24px;background:rgb(44, 61, 41)"><i>86o</i><b class="D">64</b></div>
<div class="c" style="left:167px;top:190px;width:24px;height:24px;background:rgb(47, 67, 43)"><i>76o</i><b class="D">123</b></div>
<div class="c" style="left:191px;top:190px;width:24px;height:24px;background:rgb(82, 130, 57)"><i>66</i><b class="B">2.1k</b></div>
<div class="c" style="left:215px;top:190px;width:23px;height:24px;background:rgb(65, 98, 54)"><i>65s</i><b class="R">496</b></div>
<div class="c" style="left:238px;top:190px;width:24px;height:24px;background:rgb(57, 84, 50)"><i>64s</i><b class="R">167</b></div>
<div class="c" style="left:262px;top:190px;width:24px;height:24px;background:rgb(48, 68, 43)"><i>63s</i><b class="D">46</b></div>
<div class="c" style="left:286px;top:190px;width:24px;height:24px;background:rgb(44, 61, 41)"><i>62s</i><b class="D">21</b></div>
<div class="c" style="left:0px;top:214px;width:24px;height:23px;background:rgb(58, 85, 50)"><i>A5o</i><b class="M">634</b></div>
<div class="c" style="left:24px;top:214px;width:24px;height:23px;background:rgb(44, 61, 41)"><i>K5o</i><b class="D">87</b></div>
<div class="c" style="left:48px;top:214px;width:24px;height:23px;background:rgb(44, 61, 41)"><i>Q5o</i><b class="D">39</b></div>
<div class="c" style="left:72px;top:214px;width:23px;height:23px;background:rgb(44, 61, 41)"><i>J5o</i><b class="D">19</b></div>
<div class="c" style="left:95px;top:214px;width:24px;height:23px;background:rgb(44, 61, 41)"><i>T5o</i><b class="D">20</b></div>
<div class="c" style="left:119px;top:214px;width:24px;height:23px;background:rgb(44, 61, 41)"><i>95o</i><b class="D">16</b></div>
<div class="c" style="left:143px;top:214px;width:24px;height:23px;background:rgb(44, 61, 41)"><i>85o</i><b class="D">21</b></div>
<div class="c" style="left:167px;top:214px;width:24px;height:23px;background:rgb(44, 61, 41)"><i>75o</i><b class="D">63</b></div>
<div class="c" style="left:191px;top:214px;width:24px;height:23px;background:rgb(44, 61, 41)"><i>65o</i><b class="D">61</b></div>
<div class="c" style="left:215px;top:214px;width:23px;height:23px;background:rgb(68, 104, 55)"><i>55</i><b class="M">765</b></div>
<div class="c" style="left:238px;top:214px;width:24px;height:23px;background:rgb(60, 89, 51)"><i>54s</i><b class="R">255</b></div>
<div class="c" style="left:262px;top:214px;width:24px;height:23px;background:rgb(46, 64, 42)"><i>53s</i><b class="D">64</b></div>
<div class="c" style="left:286px;top:214px;width:24px;height:23px;background:rgb(44, 61, 41)"><i>52s</i><b class="D">30</b></div>
<div class="c" style="left:0px;top:237px;width:24px;height:24px;background:rgb(58, 85, 50)"><i>A4o</i><b class="M">651</b></div>
<div class="c" style="left:24px;top:237px;width:24px;height:24px;background:rgb(44, 61, 41)"><i>K4o</i><b class="D">55</b></div>
<div class="c" style="left:48px;top:237px;width:24px;height:24px;background:rgb(44, 61, 41)"><i>Q4o</i><b class="D">35</b></div>
<div class="c" style="left:72px;top:237px;width:23px;height:24px;background:rgb(44, 61, 41)"><i>J4o</i><b class="D">13</b></div>
<div class="c" style="left:95px;top:237px;width:24px;height:24px;background:rgb(44, 61, 41)"><i>T4o</i><b class="D">9</b></div>
<div class="c" style="left:119px;top:237px;width:24px;height:24px;background:rgb(44, 61, 41)"><i>94o</i><b class="D">12</b></div>
<div class="c" style="left:143px;top:237px;width:24px;height:24px;background:rgb(44, 61, 41)"><i>84o</i><b class="D">15</b></div>
<div class="c" style="left:167px;top:237px;width:24px;height:24px;background:rgb(44, 61, 41)"><i>74o</i><b class="D">16</b></div>
<div class="c" style="left:191px;top:237px;width:24px;height:24px;background:rgb(44, 61, 41)"><i>64o</i><b class="D">22</b></div>
<div class="c" style="left:215px;top:237px;width:23px;height:24px;background:rgb(44, 61, 41)"><i>54o</i><b class="D">27</b></div>
<div class="c" style="left:238px;top:237px;width:24px;height:24px;background:rgb(71, 109, 56)"><i>44</i><b class="M">583</b></div>
<div class="c" style="left:262px;top:237px;width:24px;height:24px;background:rgb(47, 67, 43)"><i>43s</i><b class="D">104</b></div>
<div class="c" style="left:286px;top:237px;width:24px;height:24px;background:rgb(44, 61, 41)"><i>42s</i><b class="D">24</b></div>
<div class="c" style="left:0px;top:261px;width:24px;height:24px;background:rgb(58, 85, 50)"><i>A3o</i><b class="M">598</b></div>
<div class="c" style="left:24px;top:261px;width:24px;height:24px;background:rgb(44, 61, 41)"><i>K3o</i><b class="D">58</b></div>
<div class="c" style="left:48px;top:261px;width:24px;height:24px;background:rgb(44, 61, 41)"><i>Q3o</i><b class="D">26</b></div>
<div class="c" style="left:72px;top:261px;width:23px;height:24px;background:rgb(44, 61, 41)"><i>J3o</i><b class="D">15</b></div>
<div class="c" style="left:95px;top:261px;width:24px;height:24px;background:rgb(44, 61, 41)"><i>T3o</i><b class="D">13</b></div>
<div class="c" style="left:119px;top:261px;width:24px;height:24px;background:rgb(44, 61, 41)"><i>93o</i><b class="D">8</b></div>
<div class="c" style="left:143px;top:261px;width:24px;height:24px;background:rgb(44, 61, 41)"><i>83o</i><b class="D">14</b></div>
<div class="c" style="left:167px;top:261px;width:24px;height:24px;background:rgb(44, 61, 41)"><i>73o</i><b class="D">18</b></div>
<div class="c" style="left:191px;top:261px;width:24px;height:24px;background:rgb(44, 61, 41)"><i>63o</i><b class="D">9</b></div>
<div class="c" style="left:215px;top:261px;width:23px;height:24px;background:rgb(44, 61, 41)"><i>53o</i><b class="D">11</b></div>
<div class="c" style="left:238px;top:261px;width:24px;height:24px;background:rgb(44, 61, 41)"><i>43o</i><b class="D">21</b></div>
<div class="c" style="left:262px;top:261px;width:24px;height:24px;background:rgb(71, 109, 56)"><i>33</i><b class="M">582</b></div>
<div class="c" style="left:286px;top:261px;width:24px;height:24px;background:rgb(46, 64, 42)"><i>32s</i><b class="D">66</b></div>
<div class="c" style="left:0px;top:285px;width:24px;height:23px;background:rgb(58, 85, 50)"><i>A2o</i><b class="M">554</b></div>
<div class="c" style="left:24px;top:285px;width:24px;height:23px;background:rgb(44, 61, 41)"><i>K2o</i><b class="D">44</b></div>
<div class="c" style="left:48px;top:285px;width:24px;height:23px;background:rgb(44, 61, 41)"><i>Q2o</i><b class="D">27</b></div>
<div class="c" style="left:72px;top:285px;width:23px;height:23px;background:rgb(44, 61, 41)"><i>J2o</i><b class="D">18</b></div>
<div class="c" style="left:95px;top:285px;width:24px;height:23px;background:rgb(44, 61, 41)"><i>T2o</i><b class="D">19</b></div>
<div class="c" style="left:119px;top:285px;width:24px;height:23px;background:rgb(44, 61, 41)"><i>92o</i><b class="D">12</b></div>
<div class="c" style="left:143px;top:285px;width:24px;height:23px;background:rgb(44, 61, 41)"><i>82o</i><b class="D">8</b></div>
<div class="c" style="left:167px;top:285px;width:24px;height:23px;background:rgb(44, 61, 41)"><i>72o</i><b class="D">13</b></div>
<div class="c" style="left:191px;top:285px;width:24px;height:23px;background:rgb(44, 61, 41)"><i>62o</i><b class="D">4</b></div>
<div class="c" style="left:215px;top:285px;width:23px;height:23px;background:rgb(44, 61, 41)"><i>52o</i><b class="D">14</b></div>
<div class="c" style="left:238px;top:285px;width:24px;height:23px;background:rgb(44, 61, 41)"><i>42o</i><b class="D">15</b></div>
<div class="c" style="left:262px;top:285px;width:24px;height:23px;background:rgb(44, 61, 41)"><i>32o</i><b class="D">11</b></div>
<div class="c" style="left:286px;top:285px;width:24px;height:23px;background:rgb(71, 109, 56)"><i>22</i><b class="M">540</b></div>
</div>
<span style="top:182.8px;font-size:16px;line-height:24px;color:#c9c9c9;transform:scaleX(0.807);transform-origin:0 50%;left:739.4px;">RFI</span>
<span style="top:204.0px;font-size:11.2px;line-height:16px;color:#929292;transform:scaleX(0.930);transform-origin:0 50%;left:739px;">Total</span>
<span style="top:204.0px;font-size:11.6px;line-height:16px;color:#dcdcdc;transform:scaleX(0.899);transform-origin:0 50%;left:825.6px;">19</span>
<span style="top:227.0px;font-size:11.2px;line-height:16px;color:#929292;transform:scaleX(0.904);transform-origin:0 50%;left:739px;">Fish on BB</span>
<span style="top:227.0px;font-size:11.6px;line-height:16px;color:#dcdcdc;transform:scaleX(0.899);transform-origin:0 50%;left:825.6px;">19</span>
<span style="top:242.6px;font-size:11.2px;line-height:16px;color:#929292;transform:scaleX(0.906);transform-origin:0 50%;left:739px;">Fish on SB or BB</span>
<span style="top:242.6px;font-size:11.6px;line-height:16px;color:#dcdcdc;transform:scaleX(0.899);transform-origin:0 50%;left:825.6px;">18</span>
<span style="top:258.3px;font-size:11.2px;line-height:16px;color:#929292;transform:scaleX(0.945);transform-origin:0 50%;left:739px;">Regs on blinds</span>
<span style="top:258.3px;font-size:11.6px;line-height:16px;color:#dcdcdc;transform:scaleX(0.899);transform-origin:0 50%;left:825.6px;">21</span>
<span style="top:512.7px;font-size:13px;line-height:18px;color:#ffffff;transform:scaleX(0.949);transform-origin:0 50%;left:423px;">Total IP [HU]</span>
<span style="top:512.7px;font-size:13px;line-height:18px;color:#9a9a9a;transform:scaleX(0.968);transform-origin:0 50%;left:537.5px;">Total OOP [HU]</span>
<span style="top:512.7px;font-size:13px;line-height:18px;color:#9a9a9a;transform:scaleX(0.968);transform-origin:0 50%;left:668px;">Total IP [MWP]</span>
<span style="top:512.7px;font-size:13px;line-height:18px;color:#9a9a9a;transform:scaleX(0.958);transform-origin:0 50%;left:796px;">Total OOP [MWP]</span>
<div class="ul" style="left:401px;top:536px;width:113px"></div>
<span style="top:545.6px;font-size:13px;line-height:18px;color:#ffffff;transform:scaleX(0.900);transform-origin:0 50%;left:423px;">CBet</span>
<span style="top:545.6px;font-size:13px;line-height:18px;color:#9a9a9a;transform:scaleX(0.953);transform-origin:0 50%;left:494px;">CBet / Fold</span>
<span style="top:545.6px;font-size:13px;line-height:18px;color:#9a9a9a;transform:scaleX(0.934);transform-origin:0 50%;left:601px;">Skip CBet</span>
<div class="ul" style="left:401px;top:568px;width:69px"></div>
<div class="hd" style="left:487px;top:573px;width:50px;height:26px"></div>
<span style="top:574.2px;font-size:17px;line-height:24px;color:#cfcfcf;transform:scaleX(0.952);transform-origin:0 50%;left:498px;">Flop</span>
<div class="hd" style="left:636px;top:573px;width:55px;height:26px"></div>
<span style="top:574.2px;font-size:17px;line-height:24px;color:#cfcfcf;transform:scaleX(0.961);transform-origin:0 50%;left:647px;">Turn</span>
<div class="hd" style="left:796px;top:573px;width:61px;height:26px"></div>
<span style="top:574.2px;font-size:17px;line-height:24px;color:#cfcfcf;transform:scaleX(0.907);transform-origin:0 50%;left:807px;">River</span>
<span style="top:602.8px;font-size:11.2px;line-height:16px;color:#9c9c9c;transform:scaleX(0.956);transform-origin:0 50%;left:404px;">CBet - Bet - Bet</span>
<span style="top:625.8px;font-size:11.2px;line-height:16px;color:#9c9c9c;transform:scaleX(0.967);transform-origin:0 50%;left:404px;">X - Bet - Bet</span>
<span style="top:649.0px;font-size:11.2px;line-height:16px;color:#9c9c9c;transform:scaleX(0.955);transform-origin:0 50%;left:404px;">CBet - X - Bet</span>
<span style="top:672.0px;font-size:11.2px;line-height:16px;color:#9c9c9c;transform:scaleX(0.968);transform-origin:0 50%;left:404px;">X - X - Bet</span>
<span style="top:603.0px;font-size:12.5px;line-height:16px;color:#e8912d;transform:scaleX(0.899);transform-origin:0 50%;left:503px;">68</span>
<span style="top:603.0px;font-size:12.5px;line-height:16px;color:#e8912d;transform:scaleX(0.957);transform-origin:0 50%;left:656.7px;">47</span>
<span style="top:628.0px;font-size:12.5px;line-height:16px;color:#e8912d;transform:scaleX(0.913);transform-origin:0 50%;left:658px;">52</span>
<span style="top:603.0px;font-size:12.5px;line-height:16px;color:#e8912d;transform:scaleX(0.913);transform-origin:0 50%;left:818px;">45</span>
<span style="top:628.0px;font-size:12.5px;line-height:16px;color:#e8912d;transform:scaleX(0.913);transform-origin:0 50%;left:819px;">38</span>
<span style="top:651.0px;font-size:12.5px;line-height:16px;color:#e8912d;transform:scaleX(0.913);transform-origin:0 50%;left:819px;">29</span>
<span style="top:674.4px;font-size:12.5px;line-height:16px;color:#e8912d;transform:scaleX(0.913);transform-origin:0 50%;left:819px;">22</span>
<div class="bar" style="left:539px;top:604px;background:linear-gradient(90deg,#47a34b 0px,#47a34b 37.2px,#a89a3c 40.5px,#a89a3c 40.5px,#2b7fb0 43.8px,#2b7fb0 60px,#dc8b86 60px,#dc8b86 76px,#cf656b 76px,#cf656b 84px,#bd4a52 84px,#bd4a52 92px)"><div class="ov" style="left:4px;width:55px"></div><span style="left:8.8px;letter-spacing:-0.3px;transform:scaleX(0.867);transform-origin:0 50%">37% weak</span></div>
<div class="bar" style="left:698px;top:604px;background:linear-gradient(90deg,#47a34b 0px,#47a34b 9.2px,#2b7fb0 12.8px,#2b7fb0 35px,#cf656b 35px,#cf656b 68px,#bd4a52 68px,#bd4a52 92px)"><div class="ov" style="left:4px;width:54px"></div><span style="left:8.8px;letter-spacing:-0.3px;transform:scaleX(0.867);transform-origin:0 50%">21% weak</span></div>
<div class="bar" style="left:698px;top:627.2px;background:linear-gradient(90deg,#47a34b 0px,#47a34b 19.2px,#a89a3c 22.8px,#a89a3c 32.2px,#2b7fb0 35.8px,#2b7fb0 60px,#dc8b86 60px,#dc8b86 80px,#cf656b 80px,#cf656b 83px,#bd4a52 83px,#bd4a52 92px)"><div class="ov" style="left:4px;width:56px"></div><span style="left:8.8px;letter-spacing:-0.3px;transform:scaleX(0.867);transform-origin:0 50%">44% weak</span></div>
<div class="bar" style="left:861px;top:604px;background:linear-gradient(90deg,#47a34b 0px,#47a34b 14px,#cf656b 14px,#cf656b 57px,#bd4a52 57px,#bd4a52 92px)"><div class="ov" style="left:4px;width:54px"></div><span style="left:8.8px;letter-spacing:-0.3px;transform:scaleX(0.867);transform-origin:0 50%">14% weak</span></div>
<div class="bar" style="left:861px;top:627.2px;background:linear-gradient(90deg,#47a34b 0px,#47a34b 14.2px,#a89a3c 17.8px,#a89a3c 21px,#cf656b 21px,#cf656b 57px,#bd4a52 57px,#bd4a52 92px)"><div class="ov" style="left:4px;width:54px"></div><span style="left:8.8px;letter-spacing:-0.3px;transform:scaleX(0.867);transform-origin:0 50%">16% weak</span></div>
<div class="bar" style="left:861px;top:650.5px;background:linear-gradient(90deg,#47a34b 0px,#47a34b 21.2px,#a89a3c 24.8px,#a89a3c 34px,#cf656b 34px,#cf656b 57px,#bd4a52 57px,#bd4a52 92px)"><div class="ov" style="left:4px;width:54px"></div><span style="left:8.8px;letter-spacing:-0.3px;transform:scaleX(0.867);transform-origin:0 50%">29% weak</span></div>
<div class="bar" style="left:861px;top:673.5px;background:linear-gradient(90deg,#47a34b 0px,#47a34b 27.2px,#a89a3c 30.8px,#a89a3c 44px,#dc8b86 44px,#dc8b86 63px,#bd4a52 63px,#bd4a52 92px)"><div class="ov" style="left:4px;width:54px"></div><span style="left:8.8px;letter-spacing:-0.3px;transform:scaleX(0.867);transform-origin:0 50%">35% weak</span></div>
<div id="hthumb"></div>
<span style="top:794.0px;font-size:13px;line-height:18px;color:#a9a097;transform:scaleX(0.966);transform-origin:0 50%;left:203px;font-weight:700;">Hand2Note Beta</span>
<span style="top:794.0px;font-size:13px;line-height:18px;color:#a9a097;transform:scaleX(0.953);transform-origin:0 50%;left:939.7px;">Hand2Note 4.0.0.153</span>
</body>
</html>
